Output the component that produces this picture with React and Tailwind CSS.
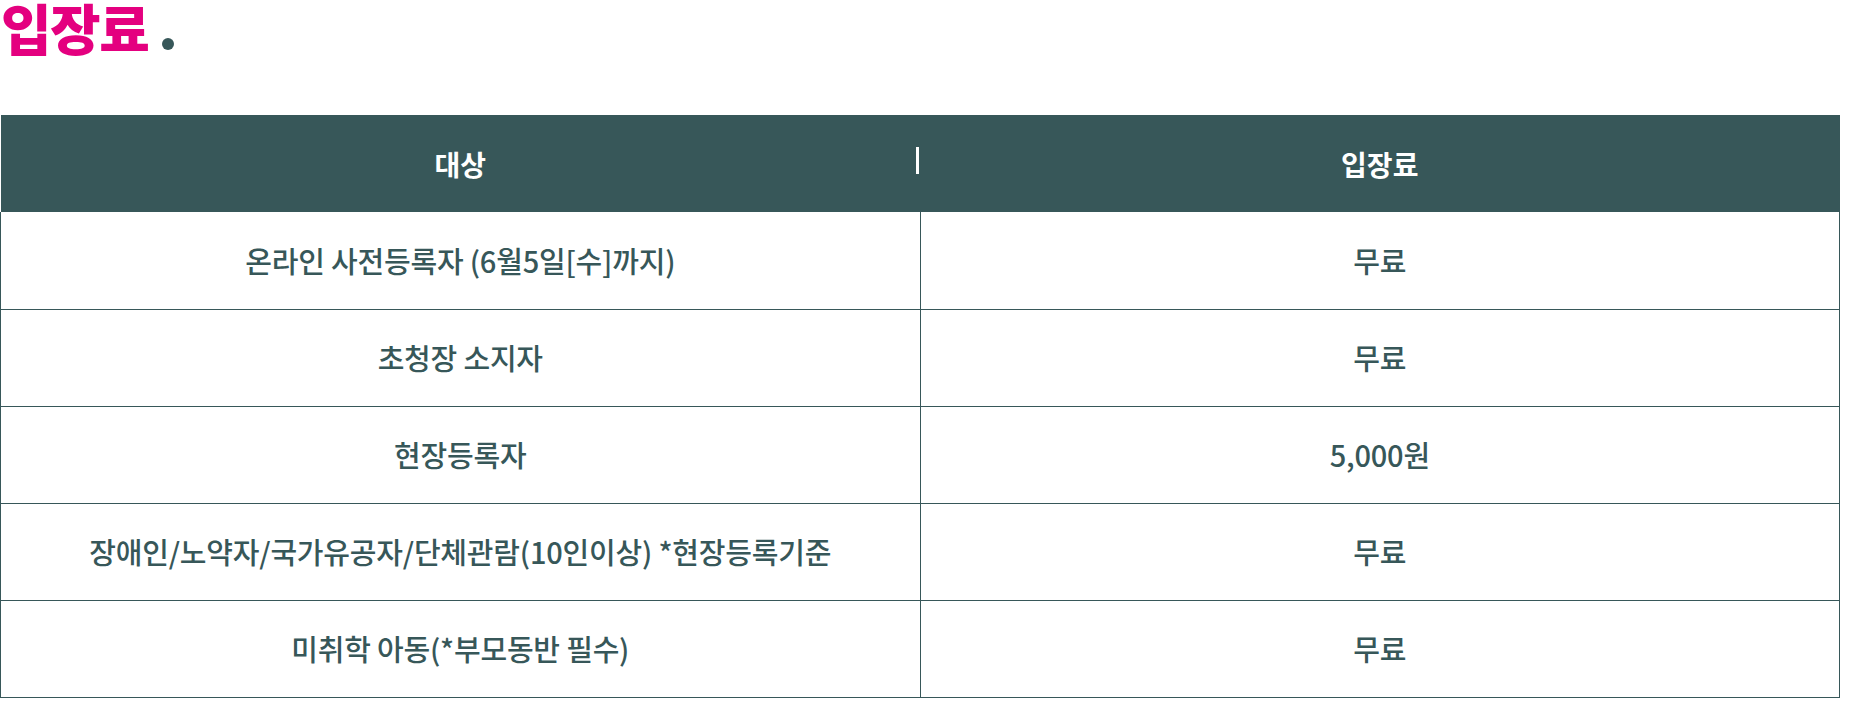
import React from 'react';

const rows = [
  { target: '온라인 사전등록자 (6월5일[수]까지)', fee: '무료' },
  { target: '초청장 소지자', fee: '무료' },
  { target: '현장등록자', fee: '5,000원' },
  { target: '장애인/노약자/국가유공자/단체관람(10인이상) *현장등록기준', fee: '무료' },
  { target: '미취학 아동(*부모동반 필수)', fee: '무료' },
];

const App = () => {
  return (
    <div className="w-[1840px] bg-white font-['Noto_Sans_CJK_KR',sans-serif]">
      <h2 className="flex h-[115px] items-start pl-[1px]">
        <span className="text-[55px] font-black leading-[52px] tracking-[-1.5px] text-[#e4007f]">입장료</span>
        <span className="ml-[14px] mt-[38px] h-[12px] w-[12px] rounded-full bg-[#375759]" />
      </h2>

      <table className="w-full table-fixed border-collapse text-center">
        <thead>
          <tr className="h-[97px] bg-[#375759] text-[28px] font-semibold text-white">
            <th className="relative w-1/2 font-semibold">
              대상
              <span className="absolute right-[1px] top-[32px] h-[27px] w-[3px] bg-white" />
            </th>
            <th className="w-1/2 font-semibold">입장료</th>
          </tr>
        </thead>
        <tbody>
          {rows.map((row) => (
            <tr key={row.target} className="h-[97px] text-[29px] font-medium tracking-[-0.2px] text-[#375759]">
              <td className="border border-t-0 border-[#375759]">{row.target}</td>
              <td className="border border-t-0 border-[#375759]">{row.fee}</td>
            </tr>
          ))}
        </tbody>
      </table>
    </div>
  );
};

export default App;
